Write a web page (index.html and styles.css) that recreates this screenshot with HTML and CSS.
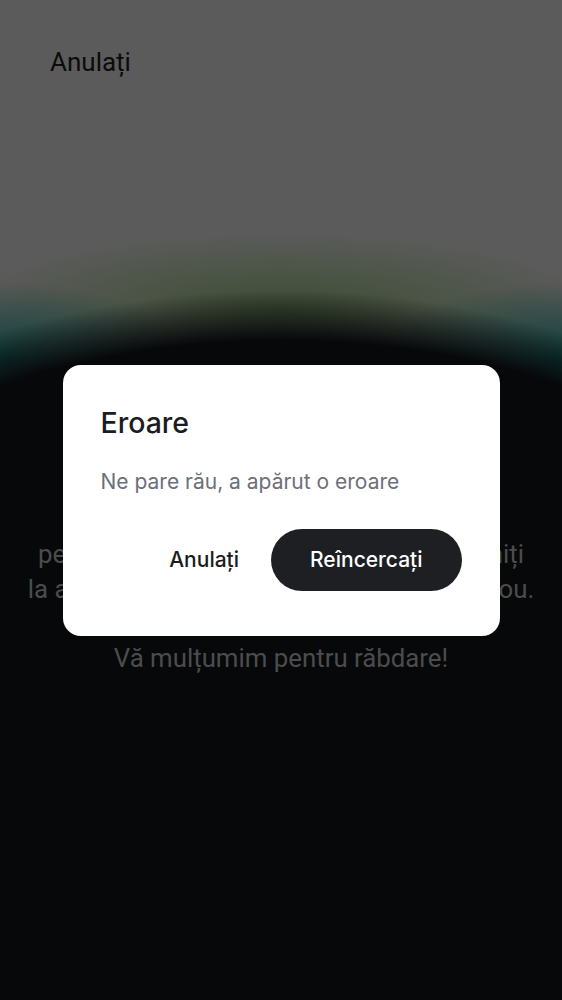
FILE: index.html
```html
<!DOCTYPE html>
<html lang="ro">
<head>
<meta charset="utf-8">
<title>Eroare</title>
<link rel="stylesheet" href="styles.css">
</head>
<body>
<div class="screen">
  <header class="topbar">
    <button class="topbar-cancel" type="button">Anulați</button>
  </header>
  <div class="hero"></div>
  <div class="message">
    <p class="message-text">pentru o mentenanță. Vă rugăm să reveniți<br>la aplicație mai târziu și să încercați din nou.</p>
    <p class="message-text">Vă mulțumim pentru răbdare!</p>
  </div>
</div>

<div class="overlay">
  <div class="dialog" role="alertdialog" aria-labelledby="dlg-title">
    <h2 class="dialog-title" id="dlg-title">Eroare</h2>
    <p class="dialog-body">Ne pare rău, a apărut o eroare</p>
    <div class="dialog-actions">
      <button class="btn-text" type="button">Anulați</button>
      <button class="btn-primary" type="button">Reîncercați</button>
    </div>
  </div>
</div>
</body>
</html>
```

FILE: styles.css
```css
html, body {
  margin: 0;
  padding: 0;
}

body {
  background: #07080a;
  font-family: "Inter", "Noto Sans", sans-serif;
}

.screen {
  height: 1000px;
  display: flex;
  flex-direction: column;
  font-family: "Roboto", "Liberation Sans", sans-serif;
  background:
    radial-gradient(ellipse 828px 700px at 50% 990px, #07080a 0%, #07080a 92.8%, rgba(7, 8, 10, 0) 100%),
    radial-gradient(ellipse 190px 80px at 0% 362px, rgba(10, 62, 58, 1), rgba(10, 62, 58, 0)),
    radial-gradient(ellipse 190px 80px at 100% 362px, rgba(10, 62, 58, 1), rgba(10, 62, 58, 0)),
    radial-gradient(ellipse 320px 75px at 50% 308px, rgba(62, 78, 52, 1), rgba(62, 78, 52, 0)),
    #5b5b5b;
}

.topbar {
  height: 124px;
  display: flex;
  align-items: center;
  padding-left: 50px;
  flex: none;
}

.topbar-cancel {
  border: 0;
  padding: 0;
  background: none;
  font-family: "Roboto", "Liberation Sans", sans-serif;
  font-size: 26px;
  font-weight: 400;
  line-height: 30px;
  color: #0b0b0b;
}

.hero {
  height: 413px;
  flex: none;
}

.message {
  display: flex;
  flex-direction: column;
  gap: 34.5px;
}

.message-text {
  margin: 0;
  text-align: center;
  font-size: 25.8px;
  line-height: 34.5px;
  color: #4c4c4c;
}

.overlay {
  position: fixed;
  inset: 0;
  display: flex;
  align-items: center;
  justify-content: center;
}

.dialog {
  width: 437px;
  box-sizing: border-box;
  padding: 41px 38px 45px;
  background: #ffffff;
  border-radius: 18px;
  font-family: "Inter", "Noto Sans", sans-serif;
}

.dialog-title {
  margin: 0;
  font-size: 28.5px;
  font-weight: 500;
  line-height: 34px;
  color: #1b1c20;
}

.dialog-body {
  margin: 28px 0 0;
  font-size: 21px;
  line-height: 28px;
  color: #6b7079;
}

.dialog-actions {
  margin-top: 33px;
  display: flex;
  justify-content: flex-end;
  gap: 12px;
}

.btn-text,
.btn-primary {
  height: 62px;
  border: 0;
  font-family: "Inter", sans-serif;
  font-size: 21px;
  font-weight: 500;
  cursor: pointer;
}

.btn-text {
  padding: 0 20px;
  background: none;
  color: #1b1c20;
}

.btn-primary {
  padding: 0 39px;
  border-radius: 31px;
  background: #1e1f23;
  color: #ffffff;
}
```
